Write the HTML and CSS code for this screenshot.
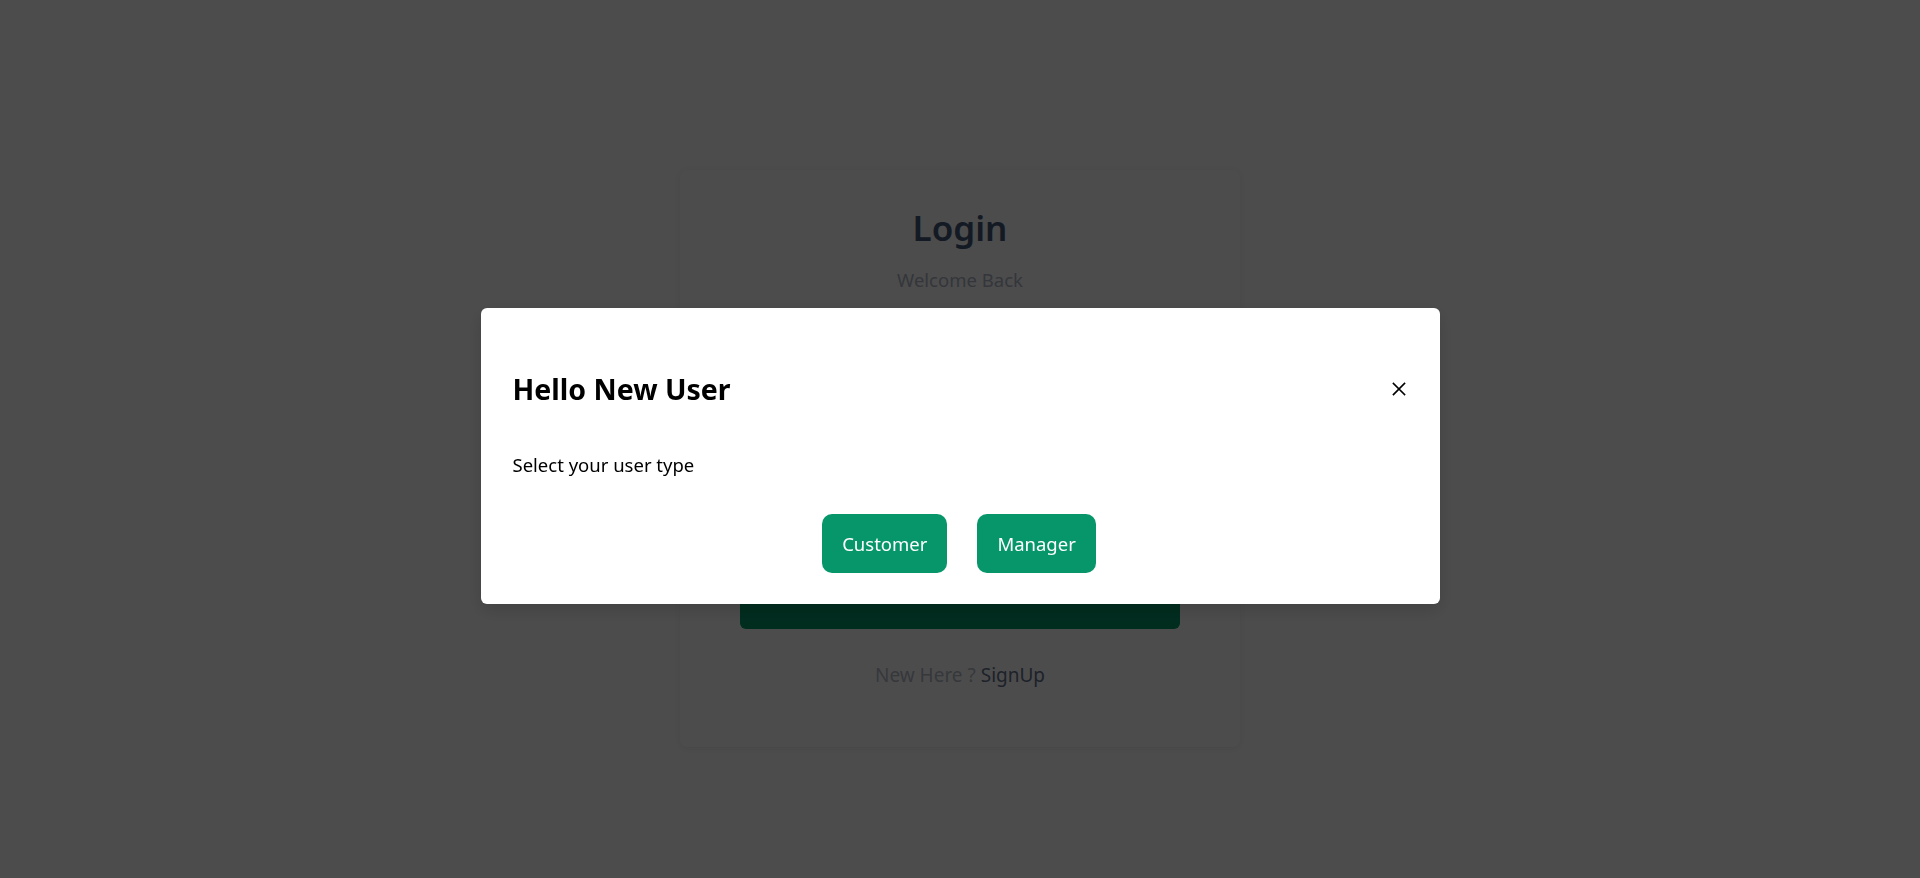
FILE: index.html
```html
<!DOCTYPE html>
<html lang="en">
<head>
<meta charset="utf-8">
<title>Login</title>
<link rel="stylesheet" href="styles.css">
</head>
<body>
<main class="page">
  <section class="card">
    <h1 class="card-title">Login</h1>
    <p class="card-subtitle">Welcome Back</p>
    <form class="form">
      <label class="field">
        <span class="field-label">Email</span>
        <input class="field-input" type="email" placeholder="Enter your email">
      </label>
      <label class="field">
        <span class="field-label">Password</span>
        <input class="field-input" type="password" placeholder="Enter your password">
      </label>
      <button class="login-btn" type="button">Login</button>
    </form>
    <p class="signup">New Here ? <a class="signup-link" href="#">SignUp</a></p>
  </section>
</main>

<div class="overlay">
  <div class="modal" role="dialog" aria-modal="true">
    <header class="modal-header">
      <h2 class="modal-title">Hello New User</h2>
      <button class="modal-close" type="button" aria-label="Close">
        <svg width="14" height="14" viewBox="0 0 14 14" aria-hidden="true">
          <path d="M1.5 1.5 L12.5 12.5 M12.5 1.5 L1.5 12.5" stroke="#000" stroke-width="1.7" stroke-linecap="square" fill="none"/>
        </svg>
      </button>
    </header>
    <div class="modal-body">
      <p class="modal-text">Select your user type</p>
      <div class="modal-actions">
        <button class="type-btn" type="button">Customer</button>
        <button class="type-btn" type="button">Manager</button>
      </div>
    </div>
  </div>
</div>
</body>
</html>
```

FILE: styles.css
```css
* { box-sizing: border-box; }

html, body {
  margin: 0;
  padding: 0;
  height: 100%;
}

body {
  background: #fafdfa;
  font-family: "Noto Sans", "Open Sans", sans-serif;
  overflow: hidden;
}

.page {
  display: flex;
  justify-content: center;
  padding-top: 170px;
}

.card {
  width: 560px;
  background: #ffffff;
  border-radius: 8px;
  box-shadow: 0 1px 6px rgba(0, 0, 0, 0.06);
  padding: 38px 60px 58px;
  display: flex;
  flex-direction: column;
  align-items: center;
}

.card-title {
  margin: 0;
  font-size: 35px;
  line-height: 40px;
  font-weight: 600;
  color: #43577b;
}

.card-subtitle {
  margin: 18px 0 0;
  font-size: 18.5px;
  line-height: 28px;
  color: #adb5c5;
}

.form {
  width: 100%;
  margin-top: 30px;
  display: flex;
  flex-direction: column;
  gap: 22px;
}

.field {
  display: flex;
  flex-direction: column;
  gap: 8px;
}

.field-label {
  font-size: 16px;
  line-height: 24px;
  color: #6b7280;
}

.field-input {
  height: 48px;
  border: 1px solid #d1d5db;
  border-radius: 6px;
  padding: 0 14px;
  font-family: inherit;
  font-size: 16px;
}

.login-btn {
  margin-top: 25px;
  height: 76px;
  border: none;
  border-radius: 6px;
  background: #059669;
  color: #ffffff;
  font-family: inherit;
  font-size: 19px;
}

.signup {
  margin: 32px 0 0;
  font-size: 19px;
  line-height: 28px;
  color: #b4bbc8;
}

.signup-link {
  color: #64718c;
  text-decoration: none;
}

.overlay {
  position: fixed;
  inset: 0;
  background: rgba(0, 0, 0, 0.7);
  display: flex;
  justify-content: center;
  align-items: flex-start;
  padding-top: 308px;
}

.modal {
  width: 959px;
  background: #ffffff;
  border-radius: 6px;
  box-shadow: 0 6px 18px rgba(0, 0, 0, 0.15);
  padding: 63px 34px 31px 32px;
}

.modal-header {
  display: flex;
  justify-content: space-between;
  align-items: center;
}

.modal-title {
  margin: 0;
  font-size: 28.5px;
  line-height: 36px;
  font-weight: 700;
  color: #000000;
}

.modal-close {
  border: none;
  background: none;
  padding: 0;
  width: 14px;
  height: 14px;
  display: flex;
  cursor: pointer;
}

.modal-body {
  display: flex;
  flex-direction: column;
}

.modal-text {
  margin: 44px 0 0;
  font-size: 18.5px;
  line-height: 27px;
  color: #000000;
}

.modal-actions {
  margin-top: 36px;
  display: flex;
  justify-content: center;
  gap: 30px;
}

.type-btn {
  height: 59px;
  padding: 0 20px;
  border: none;
  border-radius: 10px;
  background: #069669;
  color: #ffffff;
  font-family: inherit;
  font-size: 18.5px;
  cursor: pointer;
}
```
